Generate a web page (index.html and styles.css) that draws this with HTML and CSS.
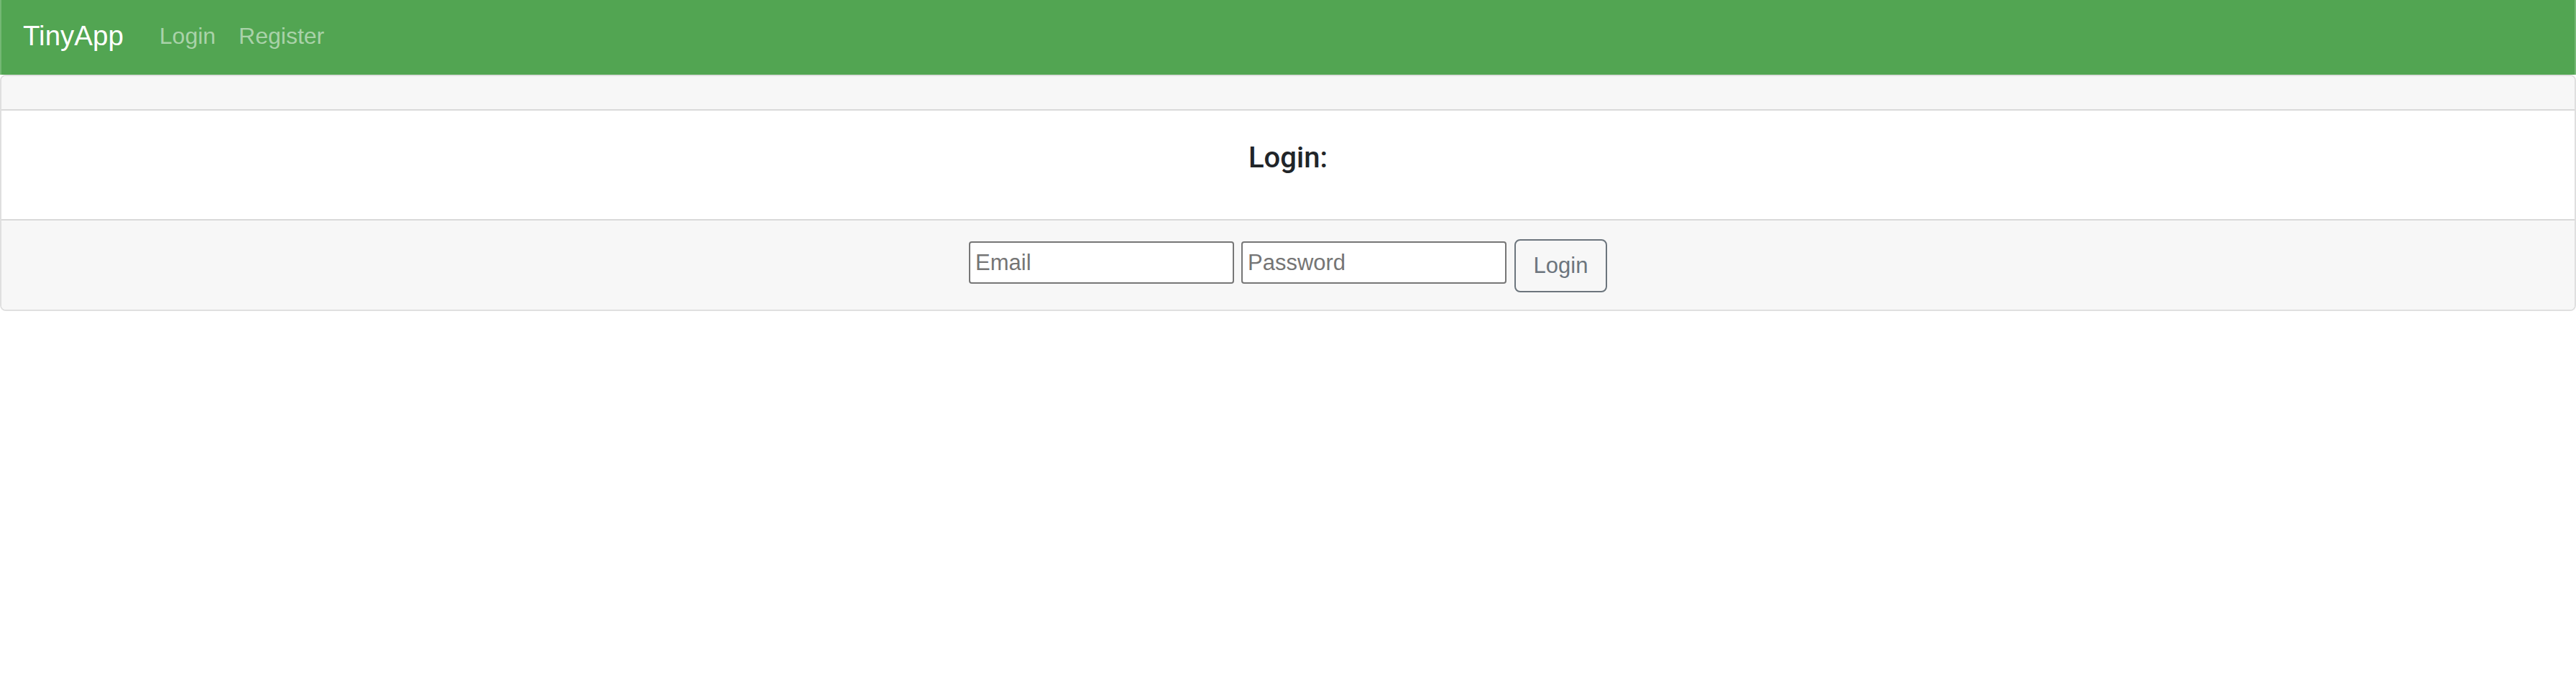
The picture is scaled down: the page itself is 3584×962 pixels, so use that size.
FILE: index.html
```html
<!DOCTYPE html>
<html lang="en">
<head>
<meta charset="utf-8">
<title>TinyApp</title>
<link rel="stylesheet" href="styles.css">
</head>
<body>
<nav class="navbar">
  <a class="brand" href="#">TinyApp</a>
  <ul class="nav">
    <li><a class="nav-link" href="#">Login</a></li>
    <li><a class="nav-link" href="#">Register</a></li>
  </ul>
</nav>
<main class="card">
  <div class="card-header"></div>
  <div class="card-body">
    <h5 class="card-title">Login:</h5>
  </div>
  <form class="card-footer">
    <input class="field" type="email" placeholder="Email">
    <input class="field" type="password" placeholder="Password">
    <button class="btn" type="submit">Login</button>
  </form>
</main>
</body>
</html>
```
FILE: styles.css
```css
* { box-sizing: border-box; }
html, body { margin: 0; padding: 0; background: #fff; }
body { font-family: "Liberation Sans", Arial, sans-serif; color: #212529; }

.navbar {
  height: 104px;
  background: #52a552;
  border-left: 2px solid #74b874;
  border-right: 2px solid #74b874;
  display: flex;
  align-items: center;
  padding: 0 0 4px 30px;
}
.brand {
  color: #fff;
  text-decoration: none;
  font-size: 38.5px;
  line-height: 60px;
  margin-right: 34px;
}
.nav {
  list-style: none;
  margin: 0;
  padding: 0;
  display: flex;
}
.nav-link {
  display: block;
  color: #a9d2a9;
  text-decoration: none;
  font-size: 32px;
  line-height: 48px;
  padding: 0 16px;
}

.card {
  border: 2px solid #dfdfdf;
  border-radius: 8px;
  overflow: hidden;
}
.card-header {
  background: #f7f7f7;
  height: 48px;
  border-bottom: 2px solid #d9d9d9;
}
.card-body {
  background: #fff;
  padding: 42px 0 45px;
  text-align: center;
}
.card-title {
  margin: 0 0 16px;
  font-family: Roboto, "Liberation Sans", sans-serif;
  font-weight: 500;
  font-size: 40px;
  line-height: 48px;
  color: #212529;
}
.card-footer {
  margin: 0;
  background: #f7f7f7;
  border-top: 2px solid #d9d9d9;
  padding: 26px 0 24px;
  display: flex;
  justify-content: center;
  align-items: flex-start;
}
.field {
  width: 369px;
  height: 59px;
  margin-top: 3px;
  margin-right: 10px;
  border: 2px solid #767676;
  border-radius: 4px;
  background: #fff;
  padding: 0 7px;
  font-family: "Liberation Sans", Arial, sans-serif;
  font-size: 31px;
  color: #212529;
}
.field::placeholder { color: #757575; }
.field + .field { margin-right: 11px; }
.btn {
  width: 129px;
  height: 74px;
  border: 2px solid #6c757d;
  border-radius: 8px;
  background: transparent;
  color: #6c757d;
  font-family: "Liberation Sans", Arial, sans-serif;
  font-size: 31px;
  padding: 0;
}
```
